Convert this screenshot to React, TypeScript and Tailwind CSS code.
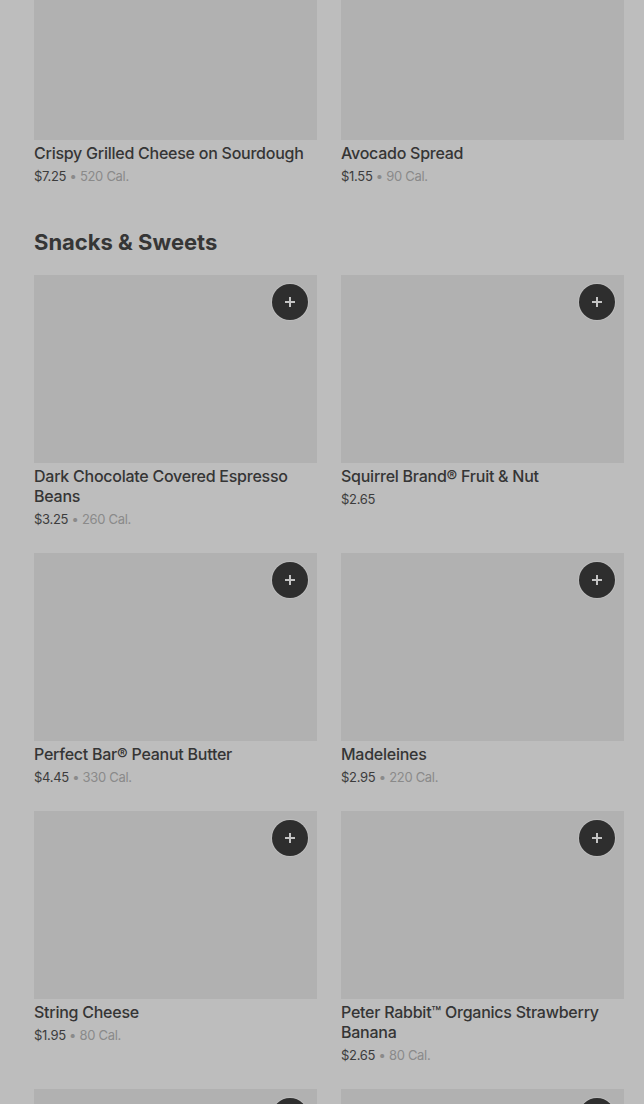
// Menu grid behind a dimmed overlay: item cards with add buttons, one section
// heading, scrolled partway so the first row's images are cut off.

type Item = { name?: string; price?: string; cal?: string };

const topRow: Item[] = [
  { name: "Crispy Grilled Cheese on Sourdough", price: "$7.25", cal: "520 Cal." },
  { name: "Avocado Spread", price: "$1.55", cal: "90 Cal." },
];

// last row sits below the fold: only the top of its images shows
const snacks: Item[] = [
  { name: "Dark Chocolate Covered Espresso Beans", price: "$3.25", cal: "260 Cal." },
  { name: "Squirrel Brand® Fruit & Nut", price: "$2.65" },
  { name: "Perfect Bar® Peanut Butter", price: "$4.45", cal: "330 Cal." },
  { name: "Madeleines", price: "$2.95", cal: "220 Cal." },
  { name: "String Cheese", price: "$1.95", cal: "80 Cal." },
  { name: "Peter Rabbit™ Organics Strawberry Banana", price: "$2.65", cal: "80 Cal." },
  {},
  {},
];

function PlusButton() {
  return (
    <button
      type="button"
      className="absolute right-[9px] top-[9px] flex h-9 w-9 items-center justify-center rounded-full bg-[#2e2e2e] shadow-[0_0_0_1px_rgba(255,255,255,0.15)]"
    >
      <svg width="14" height="14" viewBox="0 0 14 14" fill="none">
        <path d="M7 2v10M2 7h10" stroke="#c4c4c4" strokeWidth="2" />
      </svg>
    </button>
  );
}

function ItemCard({ item, withButton = true }: { item: Item; withButton?: boolean }) {
  return (
    <div className="flex flex-col">
      <div className="relative h-[188px] bg-[#b1b1b1]">{withButton && <PlusButton />}</div>
      {item.name && (
        <>
          <div className="mt-[3px] text-[16px] font-medium leading-[20px] tracking-[-0.25px] text-[#353535]">
            {item.name}
          </div>
          <div className="mt-[3px] text-[13px] leading-[20px] tracking-[-0.3px]">
            <span className="text-[#3c3c3c]">{item.price}</span>
            {item.cal && <span className="text-[#8a8a8a]"> • {item.cal}</span>}
          </div>
        </>
      )}
    </div>
  );
}

export default function App() {
  return (
    <div
      className="h-[1104px] w-[644px] overflow-hidden bg-[#bdbdbd]"
      style={{ fontFamily: "Inter, 'Liberation Sans', sans-serif" }}
    >
      <div className="-mt-[48px] pl-[34px] pr-[20px]">
        <div className="grid grid-cols-2 gap-x-6 gap-y-6">
          {topRow.map((it) => (
            <ItemCard key={it.name} item={it} withButton={false} />
          ))}
        </div>

        <h2 className="mb-[19px] mt-[42px] text-[22px] font-bold leading-[28px] text-[#363636]">
          Snacks &amp; Sweets
        </h2>

        <div className="grid grid-cols-2 gap-x-6 gap-y-6">
          {snacks.map((it, i) => (
            <ItemCard key={it.name ?? `below-${i}`} item={it} />
          ))}
        </div>
      </div>
    </div>
  );
}
